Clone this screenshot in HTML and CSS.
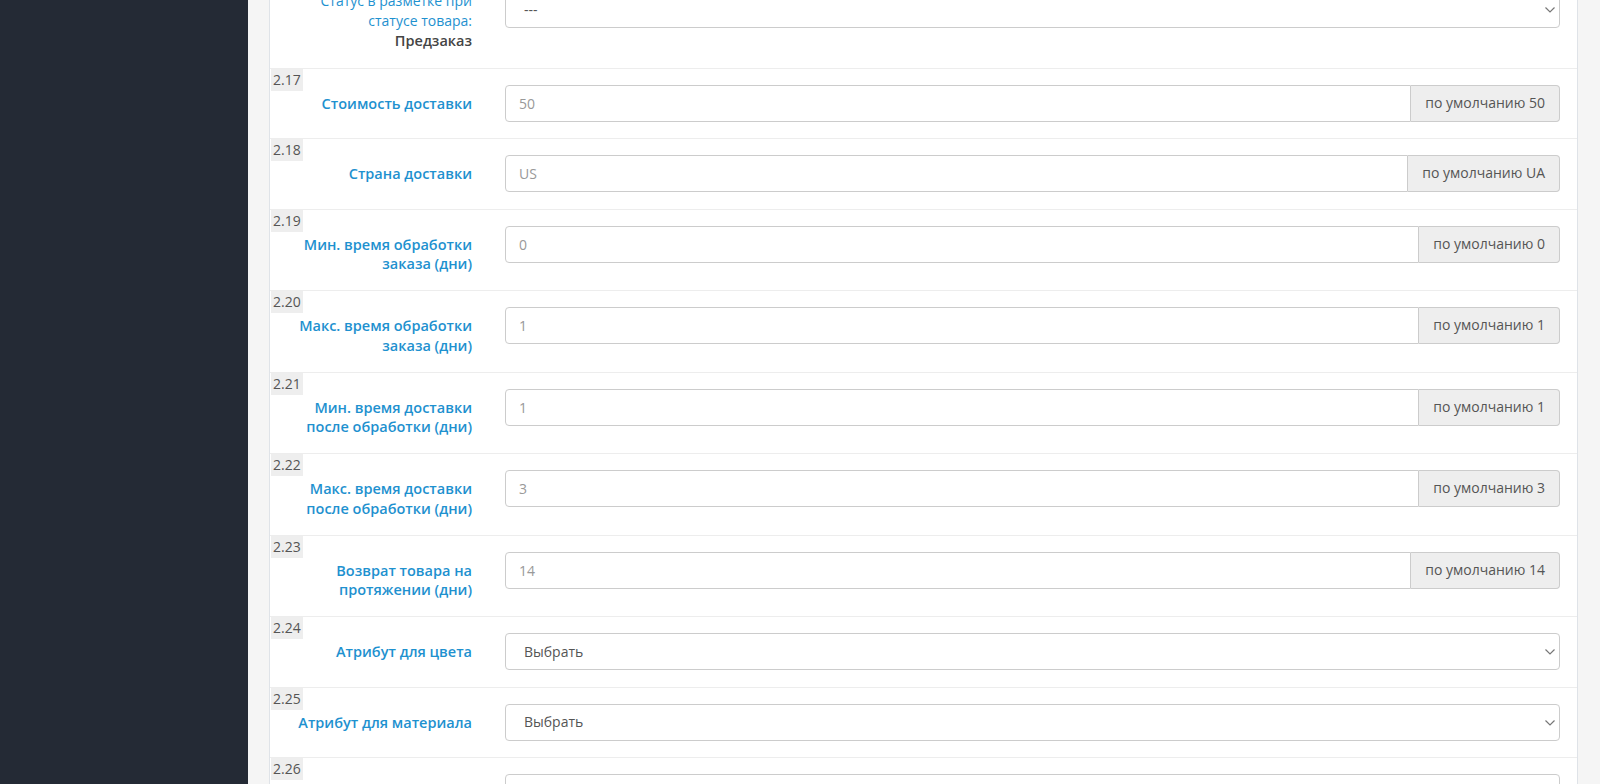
FILE: index.html
```html
<!DOCTYPE html>
<html lang="ru">
<head>
    <meta charset="UTF-8">
    <title>Настройки фида</title>
    <link rel="stylesheet" href="styles.css">
</head>
<body>
<div class="page">
    <aside class="sidebar"></aside>
    <main class="content">
        <div class="panel">
            <div class="panel-body">
                <div class="form-group first">
                    <label class="control-label plain">Статус в разметке при статусе товара:<br><b>Предзаказ</b></label>
                    <div class="select-wrap">
                        <select class="form-control"><option>---</option></select>
                        <svg class="chevron" width="10" height="6" viewBox="0 0 10 6"><polyline points="0.5,0.5 5,5 9.5,0.5"/></svg>
                    </div>
                </div>
                <div class="form-group">
                    <span class="num">2.17</span>
                    <label class="control-label">Стоимость доставки</label>
                    <div class="input-group">
                        <input class="form-control" type="text" placeholder="50">
                        <span class="addon">по умолчанию 50</span>
                    </div>
                </div>
                <div class="form-group">
                    <span class="num">2.18</span>
                    <label class="control-label">Страна доставки</label>
                    <div class="input-group">
                        <input class="form-control" type="text" placeholder="US">
                        <span class="addon">по умолчанию UA</span>
                    </div>
                </div>
                <div class="form-group">
                    <span class="num">2.19</span>
                    <label class="control-label">Мин. время обработки заказа (дни)</label>
                    <div class="input-group">
                        <input class="form-control" type="text" placeholder="0">
                        <span class="addon">по умолчанию 0</span>
                    </div>
                </div>
                <div class="form-group">
                    <span class="num">2.20</span>
                    <label class="control-label">Макс. время обработки заказа (дни)</label>
                    <div class="input-group">
                        <input class="form-control" type="text" placeholder="1">
                        <span class="addon">по умолчанию 1</span>
                    </div>
                </div>
                <div class="form-group">
                    <span class="num">2.21</span>
                    <label class="control-label">Мин. время доставки после обработки (дни)</label>
                    <div class="input-group">
                        <input class="form-control" type="text" placeholder="1">
                        <span class="addon">по умолчанию 1</span>
                    </div>
                </div>
                <div class="form-group">
                    <span class="num">2.22</span>
                    <label class="control-label">Макс. время доставки после обработки (дни)</label>
                    <div class="input-group">
                        <input class="form-control" type="text" placeholder="3">
                        <span class="addon">по умолчанию 3</span>
                    </div>
                </div>
                <div class="form-group">
                    <span class="num">2.23</span>
                    <label class="control-label">Возврат товара на протяжении (дни)</label>
                    <div class="input-group">
                        <input class="form-control" type="text" placeholder="14">
                        <span class="addon">по умолчанию 14</span>
                    </div>
                </div>
                <div class="form-group">
                    <span class="num">2.24</span>
                    <label class="control-label">Атрибут для цвета</label>
                    <div class="select-wrap">
                        <select class="form-control"><option>Выбрать</option></select>
                        <svg class="chevron" width="10" height="6" viewBox="0 0 10 6"><polyline points="0.5,0.5 5,5 9.5,0.5"/></svg>
                    </div>
                </div>
                <div class="form-group">
                    <span class="num">2.25</span>
                    <label class="control-label">Атрибут для материала</label>
                    <div class="select-wrap">
                        <select class="form-control"><option>Выбрать</option></select>
                        <svg class="chevron" width="10" height="6" viewBox="0 0 10 6"><polyline points="0.5,0.5 5,5 9.5,0.5"/></svg>
                    </div>
                </div>
                <div class="form-group">
                    <span class="num">2.26</span>
                    <label class="control-label">Атрибут для размера</label>
                    <div class="select-wrap">
                        <select class="form-control"><option>Выбрать</option></select>
                        <svg class="chevron" width="10" height="6" viewBox="0 0 10 6"><polyline points="0.5,0.5 5,5 9.5,0.5"/></svg>
                    </div>
                </div>
            </div>
        </div>
    </main>
</div>
</body>
</html>
```

FILE: styles.css
```css
* {
    margin: 0;
    padding: 0;
    box-sizing: border-box;
}

body {
    font-family: "Open Sans", "Liberation Sans", sans-serif;
    font-size: 14px;
    line-height: 20px;
    color: #555;
    background: #f5f5f5;
}

.page {
    display: flex;
    height: 784px;
    overflow: hidden;
}

.sidebar {
    width: 248px;
    flex-shrink: 0;
    background: #242a35;
}

.content {
    flex: 1;
    padding: 0 22px 0 21px;
    overflow: hidden;
}

.panel {
    background: #fff;
    border-left: 1px solid #dfe3e8;
    border-right: 1px solid #dfe3e8;
    min-height: 100%;
}

/* страница прокручена, верх первого блока не виден */
.panel-body {
    margin-top: -26px;
}

.form-group {
    position: relative;
    display: grid;
    grid-template-columns: 187px 1fr;
    column-gap: 33px;
    align-items: start;
    padding: 16px 17px 16.5px 15px;
    border-top: 1px solid #ededed;
}

.num {
    position: absolute;
    top: 0;
    left: 1px;
    padding: 1px 2px;
    background: #eee;
    color: #555;
    font-size: 14px;
    line-height: 20px;
}

.control-label {
    padding: 9px 0 0;
    text-align: right;
    font-size: 14.5px;
    line-height: 19.5px;
    font-weight: 600;
    color: #1e91cf;
}

.control-label.plain {
    padding: 0;
    font-size: 14px;
    line-height: 20px;
    font-weight: normal;
}

.control-label b {
    font-weight: 600;
    font-size: 14.5px;
    color: #444;
}

.form-control {
    display: block;
    width: 100%;
    height: 37px;
    padding: 7px 13px;
    border: 1px solid #ccc;
    border-radius: 4px;
    background: #fff;
    font-family: inherit;
    font-size: 14px;
    line-height: 20px;
    color: #555;
    outline: none;
}

.form-control::placeholder {
    color: #999;
}

.input-group {
    display: flex;
}

.input-group .form-control {
    flex: 1;
    border-radius: 4px 0 0 4px;
}

.addon {
    padding: 7px 14px 8px;
    border: 1px solid #ccc;
    border-left: 0;
    border-radius: 0 4px 4px 0;
    background: #eee;
    color: #555;
    white-space: nowrap;
}

.select-wrap {
    position: relative;
}

.select-wrap select {
    appearance: none;
    -webkit-appearance: none;
    padding: 7px 18px;
}

.chevron {
    position: absolute;
    right: 5px;
    top: 16px;
    fill: none;
    stroke: #777;
    stroke-width: 1.2;
    pointer-events: none;
}
```
